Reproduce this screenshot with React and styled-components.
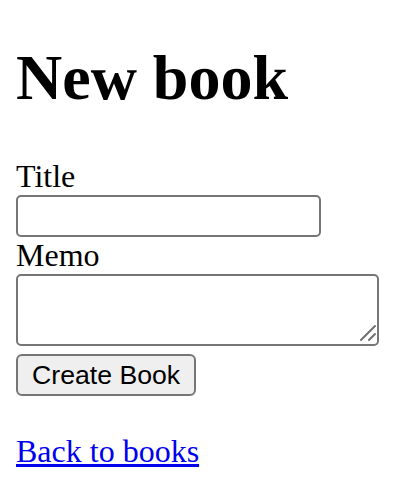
import React from "react";
import styled, { createGlobalStyle } from "styled-components";

const GlobalStyle = createGlobalStyle`
  body {
    margin: 16px;
    font-family: "Liberation Serif", "Times New Roman", serif;
    font-size: 32px;
    color: #000;
    background: #fff;
  }
`;

const Heading = styled.h1`
  font-size: 64px;
  font-weight: bold;
  margin: 25px 0 43px;
  line-height: normal;
`;

const Field = styled.div`
  line-height: normal;
`;

const Label = styled.label`
  display: block;
`;

const TextInput = styled.input`
  box-sizing: border-box;
  width: 305px;
  height: 42px;
  padding: 2px 4px;
  border: 2px solid #767676;
  border-radius: 5px;
  font-family: "Liberation Sans", Arial, sans-serif;
  font-size: 26.67px;
  background: #fff;
`;

const MemoWrap = styled.span`
  position: relative;
  display: inline-block;
`;

const Memo = styled.textarea`
  box-sizing: border-box;
  width: 363px;
  height: 72px;
  padding: 4px;
  border: 2px solid #767676;
  border-radius: 5px;
  font-family: "Liberation Mono", monospace;
  font-size: 26.67px;
  vertical-align: baseline;
  background: #fff;
  resize: none;
`;

const Grip = styled.svg`
  position: absolute;
  right: 2px;
  bottom: 12px;
  width: 18px;
  height: 18px;
  pointer-events: none;
`;

const SubmitButton = styled.button`
  box-sizing: border-box;
  height: 42px;
  padding: 2px 14px;
  margin-top: 0;
  border: 2px solid #767676;
  border-radius: 6px;
  background: #efefef;
  color: #000;
  font-family: "Liberation Sans", Arial, sans-serif;
  font-size: 26.67px;
`;

const BackLink = styled.a`
  color: #0000ee;
  text-decoration: underline;
`;

export default function App() {
  return (
    <>
      <GlobalStyle />
      <Heading>New book</Heading>
      <form onSubmit={(e) => e.preventDefault()}>
        <Field>
          <Label htmlFor="book_title">Title</Label>
          <TextInput type="text" id="book_title" />
        </Field>
        <Field>
          <Label htmlFor="book_memo">Memo</Label>
          <MemoWrap>
            <Memo id="book_memo" />
            <Grip viewBox="0 0 18 18">
              <path d="M2 16 L16 2 M10 16 L16 10" stroke="#6f6f6f" strokeWidth="2" strokeLinecap="round" fill="none" />
            </Grip>
          </MemoWrap>
        </Field>
        <Field>
          <SubmitButton type="submit">Create Book</SubmitButton>
        </Field>
      </form>
      <br />
      <Field>
        <BackLink href="#">Back to books</BackLink>
      </Field>
    </>
  );
}
